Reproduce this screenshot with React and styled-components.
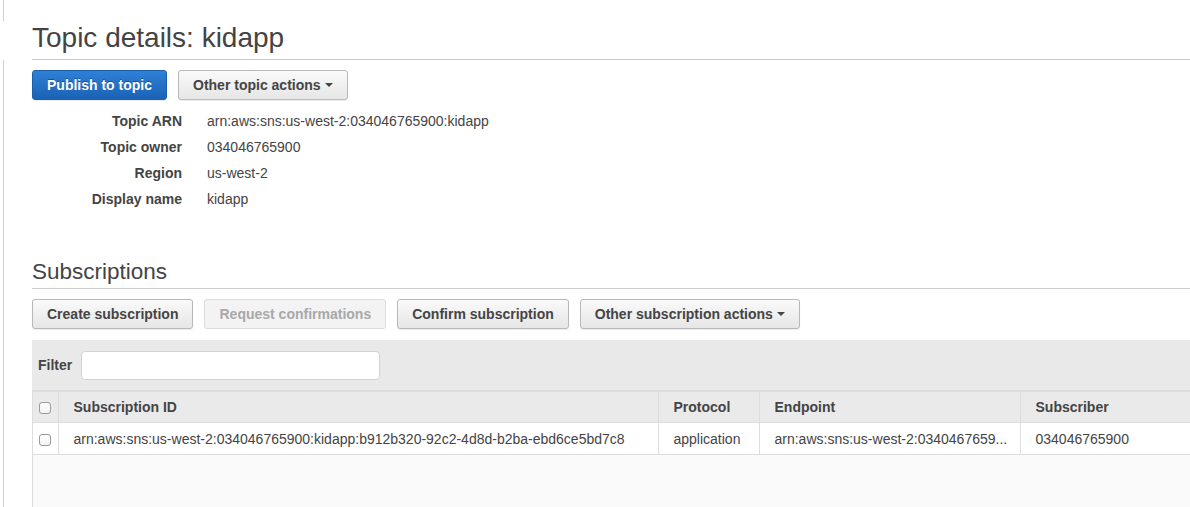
import React from "react";
import styled, { createGlobalStyle } from "styled-components";

const GlobalStyle = createGlobalStyle`
  html, body {
    margin: 0;
    padding: 0;
    background: #fff;
    overflow: hidden;
  }
  body {
    font-family: "Liberation Sans", Arial, Helvetica, sans-serif;
    color: #444;
    font-size: 14px;
  }
`;

const Page = styled.div`
  display: flex;
  min-height: 100vh;
  width: 1290px;
`;

const Rail = styled.div`
  display: flex;
  flex-direction: column;
  width: 4px;
  flex: none;
`;

const RailSeg = styled.div`
  border-right: 1px solid #d0d0d0;
  height: ${(p) => (p.$h ? `${p.$h}px` : "auto")};
  flex: ${(p) => (p.$grow ? 1 : "none")};
  margin-top: ${(p) => p.$mt || 0}px;
`;

const Main = styled.main`
  flex: 1;
  margin-left: 28px;
  display: flex;
  flex-direction: column;
`;

const Title = styled.h1`
  margin: 22px 0 0;
  font-size: 28px;
  line-height: 32px;
  font-weight: normal;
  color: #444;
  padding-bottom: 5px;
  border-bottom: 1px solid #ccc;
`;

const SectionTitle = styled.h2`
  margin: 47px 0 0;
  font-size: 22.5px;
  line-height: 26px;
  font-weight: normal;
  color: #444;
  padding-bottom: 3px;
  border-bottom: 1px solid #ccc;
`;

const Toolbar = styled.div`
  display: flex;
  gap: 11px;
  margin-top: 10px;
`;

const Button = styled.button`
  height: 30px;
  padding: 0 14px;
  font-family: inherit;
  font-size: 14px;
  font-weight: bold;
  border-radius: 3px;
  display: inline-flex;
  align-items: center;
  cursor: pointer;
  color: #444;
  border: 1px solid #b8b8b8;
  background: linear-gradient(#fafafa, #e6e6e6);
  box-shadow: 0 1px 1px rgba(0, 0, 0, 0.08);

  ${(p) =>
    p.$primary &&
    `
    color: #fff;
    border-color: #1b5ea9;
    background: linear-gradient(#2f80d8, #1a63b5);
    text-shadow: 0 -1px 0 rgba(0, 0, 0, 0.35);
  `}

  ${(p) =>
    p.disabled &&
    `
    color: #a8a8a8;
    border-color: #dcdcdc;
    background: #f3f3f3;
    box-shadow: none;
    cursor: default;
  `}
`;

const Caret = styled.span`
  display: inline-block;
  margin-left: 4px;
  border-left: 4px solid transparent;
  border-right: 4px solid transparent;
  border-top: 4px solid #444;
`;

const Details = styled.dl`
  margin: 8px 0 0;
  display: grid;
  grid-template-columns: 150px 1fr;
  column-gap: 25px;
  grid-auto-rows: 26px;
  align-items: center;
`;

const Label = styled.dt`
  text-align: right;
  font-weight: bold;
  color: #444;
`;

const Value = styled.dd`
  margin: 0;
  color: #444;
`;

const FilterBar = styled.div`
  margin-top: 11px;
  height: 50px;
  background: #e9e9e9;
  display: flex;
  align-items: center;
  padding-left: 6px;
  gap: 9px;
`;

const FilterLabel = styled.label`
  font-weight: bold;
  color: #444;
`;

const FilterInput = styled.input`
  width: 299px;
  height: 29px;
  box-sizing: border-box;
  border: 1px solid #d2d2d2;
  border-radius: 4px;
  background: #fff;
  margin-top: 1px;
`;

const TableWrap = styled.div`
  flex: 1;
  background: #fafafa;
  border-left: 1px solid #ddd;
  border-top: 2px solid #dcdcdc;
`;

const Table = styled.table`
  width: 100%;
  border-collapse: collapse;
  table-layout: fixed;
`;

const Th = styled.th`
  height: 30px;
  background: #eaeaea;
  text-align: left;
  font-weight: bold;
  font-size: 14px;
  color: #444;
  padding: 0 15px;
  border-right: 1px solid #ddd;
  border-bottom: 1px solid #ddd;
  white-space: nowrap;
`;

const Td = styled.td`
  height: 31px;
  background: #fff;
  font-size: 14px;
  color: #444;
  padding: 0 ${(p) => p.$pr ?? 15}px 0 15px;
  border-right: 1px solid #ddd;
  border-bottom: 1px solid #ddd;
  white-space: nowrap;
  overflow: hidden;
`;

const CheckCell = styled.td`
  padding: 0;
  text-align: center;
  background: ${(p) => (p.$head ? "#eaeaea" : "#fff")};
  border-right: 1px solid #ddd;
  border-bottom: 1px solid #ddd;
`;

const Check = styled.span`
  display: inline-block;
  vertical-align: middle;
  width: 10px;
  height: 10px;
  border: 1px solid #9a9a9a;
  border-radius: 3px;
  background: linear-gradient(#fff, #f2f2f2);
`;

export default function App() {
  return (
    <>
      <GlobalStyle />
      <Page>
        <Rail>
          <RailSeg $h={21} />
          <RailSeg $mt={39} $grow />
        </Rail>
        <Main>
          <Title>Topic details: kidapp</Title>
          <Toolbar>
            <Button $primary>Publish to topic</Button>
            <Button>
              Other topic actions
              <Caret />
            </Button>
          </Toolbar>
          <Details>
            <Label>Topic ARN</Label>
            <Value>arn:aws:sns:us-west-2:034046765900:kidapp</Value>
            <Label>Topic owner</Label>
            <Value>034046765900</Value>
            <Label>Region</Label>
            <Value>us-west-2</Value>
            <Label>Display name</Label>
            <Value>kidapp</Value>
          </Details>

          <SectionTitle>Subscriptions</SectionTitle>
          <Toolbar>
            <Button>Create subscription</Button>
            <Button disabled>Request confirmations</Button>
            <Button>Confirm subscription</Button>
            <Button>
              Other subscription actions
              <Caret />
            </Button>
          </Toolbar>

          <FilterBar>
            <FilterLabel>Filter</FilterLabel>
            <FilterInput type="text" />
          </FilterBar>

          <TableWrap>
            <Table>
              <colgroup>
                <col style={{ width: 25 }} />
                <col style={{ width: 600 }} />
                <col style={{ width: 101 }} />
                <col style={{ width: 261 }} />
                <col />
              </colgroup>
              <thead>
                <tr>
                  <CheckCell as="th" $head>
                    <Check />
                  </CheckCell>
                  <Th>Subscription ID</Th>
                  <Th>Protocol</Th>
                  <Th>Endpoint</Th>
                  <Th>Subscriber</Th>
                </tr>
              </thead>
              <tbody>
                <tr>
                  <CheckCell>
                    <Check />
                  </CheckCell>
                  <Td>arn:aws:sns:us-west-2:034046765900:kidapp:b912b320-92c2-4d8d-b2ba-ebd6ce5bd7c8</Td>
                  <Td>application</Td>
                  <Td $pr={4}>arn:aws:sns:us-west-2:0340467659...</Td>
                  <Td>034046765900</Td>
                </tr>
              </tbody>
            </Table>
          </TableWrap>
        </Main>
      </Page>
    </>
  );
}
